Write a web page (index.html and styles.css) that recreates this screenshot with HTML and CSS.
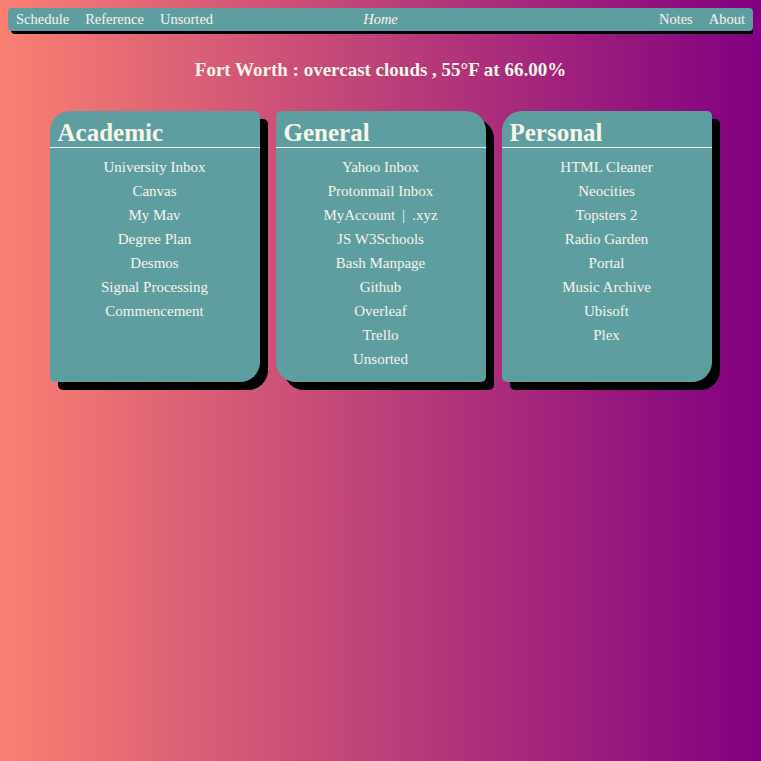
FILE: index.html
```html
<!DOCTYPE html>
<html>
<head>
<meta charset="utf-8">
<link rel="stylesheet" href="styles.css">
</head>
<body>
<nav class="navbar">
  <div class="nav-left">
    <a href="#">Schedule</a>
    <a href="#">Reference</a>
    <a href="#">Unsorted</a>
  </div>
  <div class="nav-center"><em>Home</em></div>
  <div class="nav-right">
    <a href="#">Notes</a>
    <a href="#">About</a>
  </div>
</nav>
<h2 class="weather">Fort Worth : overcast clouds , 55°F at 66.00%</h2>
<main class="cards">
  <section class="card card-a">
    <h3>Academic</h3>
    <ul>
      <li><a href="#">University Inbox</a></li>
      <li><a href="#">Canvas</a></li>
      <li><a href="#">My Mav</a></li>
      <li><a href="#">Degree Plan</a></li>
      <li><a href="#">Desmos</a></li>
      <li><a href="#">Signal Processing</a></li>
      <li><a href="#">Commencement</a></li>
    </ul>
  </section>
  <section class="card card-b">
    <h3>General</h3>
    <ul>
      <li><a href="#">Yahoo Inbox</a></li>
      <li><a href="#">Protonmail Inbox</a></li>
      <li><a href="#">MyAccount</a><span class="sep">|</span><a href="#">.xyz</a></li>
      <li><a href="#">JS W3Schools</a></li>
      <li><a href="#">Bash Manpage</a></li>
      <li><a href="#">Github</a></li>
      <li><a href="#">Overleaf</a></li>
      <li><a href="#">Trello</a></li>
      <li><a href="#">Unsorted</a></li>
    </ul>
  </section>
  <section class="card card-a">
    <h3>Personal</h3>
    <ul>
      <li><a href="#">HTML Cleaner</a></li>
      <li><a href="#">Neocities</a></li>
      <li><a href="#">Topsters 2</a></li>
      <li><a href="#">Radio Garden</a></li>
      <li><a href="#">Portal</a></li>
      <li><a href="#">Music Archive</a></li>
      <li><a href="#">Ubisoft</a></li>
      <li><a href="#">Plex</a></li>
    </ul>
  </section>
</main>
</body>
</html>
```

FILE: styles.css
```css
html {
  height: 100%;
}
body {
  margin: 8px;
  min-height: calc(100% - 16px);
  background: linear-gradient(to right, #fa8072, #800080);
  font-family: "Liberation Serif", "Times New Roman", serif;
  color: #f5f5ea;
}
a {
  color: #f5f5ea;
  text-decoration: none;
}
.navbar {
  display: grid;
  grid-template-columns: 1fr auto 1fr;
  align-items: center;
  height: 23px;
  padding: 0 8px;
  background: #5f9ea0;
  border-radius: 4px;
  box-shadow: 3px 3px 0 #000;
  font-size: 14.5px;
}
.nav-left, .nav-right {
  display: flex;
  gap: 16px;
}
.nav-right {
  justify-content: flex-end;
}
.nav-center {
  text-align: center;
}
.weather {
  margin: 27px 0 0;
  text-align: center;
  font-size: 19px;
  font-weight: bold;
  line-height: 24px;
}
.cards {
  display: flex;
  justify-content: center;
  gap: 16px;
  margin-top: 29px;
}
.card {
  width: 210px;
  height: 271px;
  background: #5f9ea0;
  box-shadow: 8px 8px 0 #000;
}
.card-a {
  border-radius: 20px 5px 20px 5px;
}
.card-b {
  border-radius: 5px 20px 5px 20px;
}
.card h3 {
  margin: 0;
  padding: 8px 8px 0;
  font-size: 25px;
  font-weight: bold;
  line-height: 27px;
  border-bottom: 1px solid #f5f5ea;
  height: 28px;
}
.card ul {
  list-style: none;
  margin: 0;
  padding: 7px 0 0;
  text-align: center;
  font-size: 15px;
  line-height: 24px;
}
.sep {
  margin: 0 7px;
}
```
